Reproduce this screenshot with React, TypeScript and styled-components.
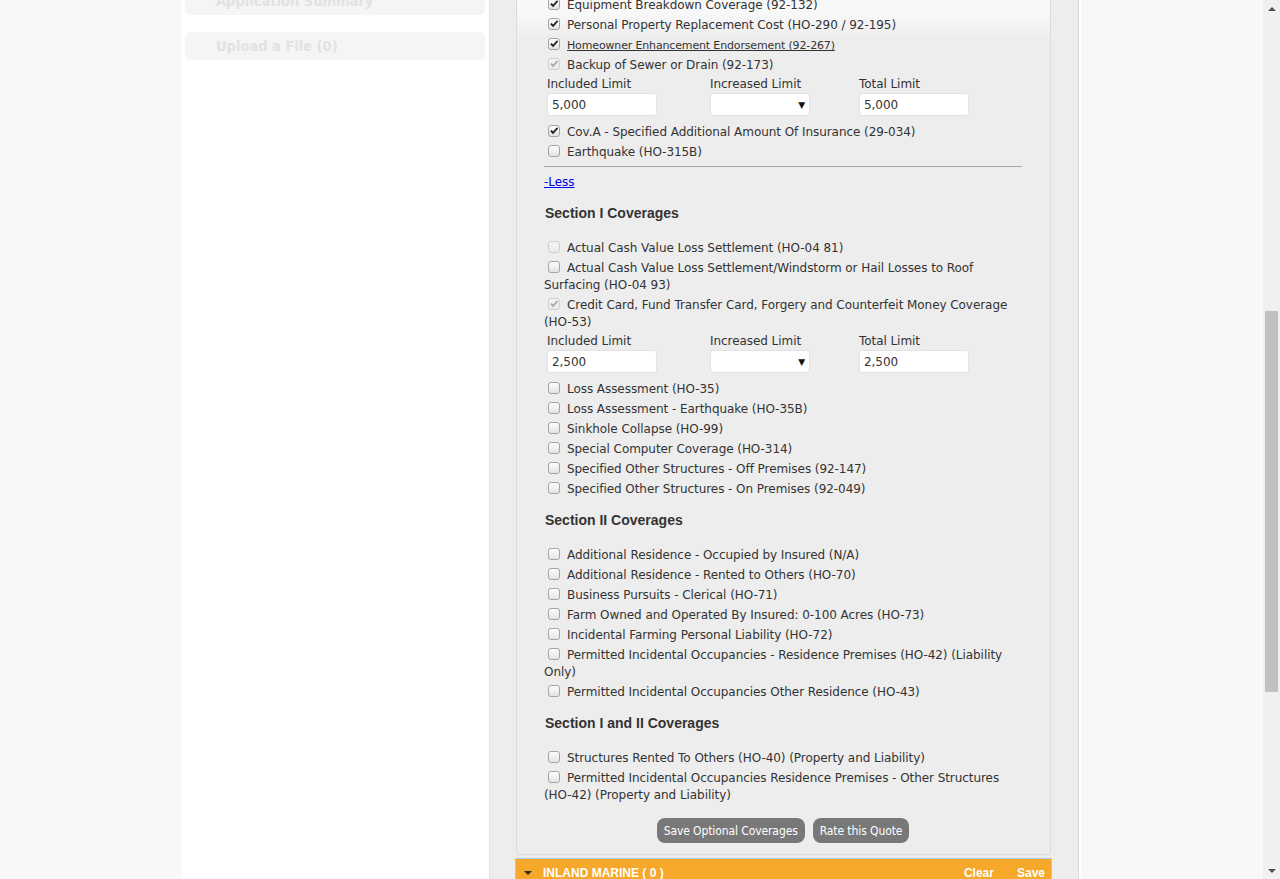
import React from "react";
import styled, { createGlobalStyle } from "styled-components";

type Item = {
  label: string;
  checked?: boolean;
  disabled?: boolean;
  link?: boolean;
  limits?: { included: string; total: string };
};

type Section = { title?: string; items: Item[] };

const topItems: Item[] = [
  { label: "Equipment Breakdown Coverage (92-132)", checked: true },
  { label: "Personal Property Replacement Cost (HO-290 / 92-195)", checked: true },
  { label: "Homeowner Enhancement Endorsement (92-267)", checked: true, link: true },
  {
    label: "Backup of Sewer or Drain (92-173)",
    checked: true,
    disabled: true,
    limits: { included: "5,000", total: "5,000" },
  },
  { label: "Cov.A - Specified Additional Amount Of Insurance (29-034)", checked: true },
  { label: "Earthquake (HO-315B)" },
];

const sections: Section[] = [
  {
    title: "Section I Coverages",
    items: [
      { label: "Actual Cash Value Loss Settlement (HO-04 81)", disabled: true },
      { label: "Actual Cash Value Loss Settlement/Windstorm or Hail Losses to Roof Surfacing (HO-04 93)" },
      {
        label: "Credit Card, Fund Transfer Card, Forgery and Counterfeit Money Coverage (HO-53)",
        checked: true,
        disabled: true,
        limits: { included: "2,500", total: "2,500" },
      },
      { label: "Loss Assessment (HO-35)" },
      { label: "Loss Assessment - Earthquake (HO-35B)" },
      { label: "Sinkhole Collapse (HO-99)" },
      { label: "Special Computer Coverage (HO-314)" },
      { label: "Specified Other Structures - Off Premises (92-147)" },
      { label: "Specified Other Structures - On Premises (92-049)" },
    ],
  },
  {
    title: "Section II Coverages",
    items: [
      { label: "Additional Residence - Occupied by Insured (N/A)" },
      { label: "Additional Residence - Rented to Others (HO-70)" },
      { label: "Business Pursuits - Clerical (HO-71)" },
      { label: "Farm Owned and Operated By Insured: 0-100 Acres (HO-73)" },
      { label: "Incidental Farming Personal Liability (HO-72)" },
      { label: "Permitted Incidental Occupancies - Residence Premises (HO-42) (Liability Only)" },
      { label: "Permitted Incidental Occupancies Other Residence (HO-43)" },
    ],
  },
  {
    title: "Section I and II Coverages",
    items: [
      { label: "Structures Rented To Others (HO-40) (Property and Liability)" },
      { label: "Permitted Incidental Occupancies Residence Premises - Other Structures (HO-42) (Property and Liability)" },
    ],
  },
];

const Check = ({ checked, disabled }: { checked?: boolean; disabled?: boolean }) => (
  <Box $disabled={disabled}>
    {checked && (
      <svg width="10" height="10" viewBox="0 0 10 10">
        <path
          d="M1.2 5.2 L2.6 3.9 L4.1 5.5 L7.9 1.2 L9.2 2.4 L4.1 8.2 Z"
          fill={disabled ? "#a8a8a8" : "#222"}
        />
      </svg>
    )}
  </Box>
);

const Coverage = ({ item }: { item: Item }) => (
  <>
    <Row>
      <Check checked={item.checked} disabled={item.disabled} />
      {item.link ? <Link>{item.label}</Link> : item.label}
    </Row>
    {item.limits && (
      <Limits>
        <Field>
          <FieldLabel>Included Limit</FieldLabel>
          <TextBox readOnly value={item.limits.included} />
        </Field>
        <Field>
          <FieldLabel>Increased Limit</FieldLabel>
          <SelectBox>▼</SelectBox>
        </Field>
        <Field>
          <FieldLabel>Total Limit</FieldLabel>
          <TextBox readOnly value={item.limits.total} />
        </Field>
      </Limits>
    )}
  </>
);

const App = () => {
  return (
    <>
      <GlobalStyle />
      <Screen>
        <Page>
          <Shell>
            <Sidebar>
              <SideButton>Application Summary</SideButton>
              <SideButton>Upload a File (0)</SideButton>
            </Sidebar>
            <Main>
              <Panel>
                {topItems.map((it) => (
                  <Coverage key={it.label} item={it} />
                ))}
                <Rule />
                <LessLink href="#">-Less</LessLink>
                {sections.map((s) => (
                  <div key={s.title}>
                    <Heading>{s.title}</Heading>
                    {s.items.map((it) => (
                      <Coverage key={it.label} item={it} />
                    ))}
                  </div>
                ))}
                <Actions>
                  <GrayButton>Save Optional Coverages</GrayButton>
                  <GrayButton>Rate this Quote</GrayButton>
                </Actions>
              </Panel>
              <OrangeBar>
                <Caret />
                <BarTitle>INLAND MARINE ( 0 )</BarTitle>
                <BarLink>Clear</BarLink>
                <BarLink>Save</BarLink>
              </OrangeBar>
            </Main>
          </Shell>
        </Page>
        <ScrollBar>
          <Arrow $up />
          <Track>
            <Thumb />
          </Track>
          <Arrow />
        </ScrollBar>
      </Screen>
    </>
  );
};

export default App;

const GlobalStyle = createGlobalStyle`
  html, body {
    margin: 0;
    padding: 0;
    overflow: hidden;
  }
  body {
    font-family: "DejaVu Sans", Verdana, sans-serif;
    font-size: 12px;
    letter-spacing: -0.06px;
    color: #333;
  }
`;

const Screen = styled.div`
  display: flex;
  width: 1280px;
  height: 879px;
  overflow: hidden;
`;

const Page = styled.div`
  flex: 1;
  background: #f8f8f8;
  overflow: hidden;
`;

const Shell = styled.div`
  width: 899px;
  margin: -28px auto 0;
  display: flex;
  background: #fff;
  min-height: 1000px;
`;

const Sidebar = styled.div`
  width: 307px;
  padding: 15px 4px 0 3px;
  box-sizing: border-box;
  display: flex;
  flex-direction: column;
  gap: 17px;
`;

const SideButton = styled.div`
  height: 28px;
  border-radius: 5px;
  background: #f5f5f5;
  color: #e2e2e2;
  font-family: "DejaVu Sans Condensed", "DejaVu Sans", sans-serif;
  font-stretch: condensed;
  font-weight: bold;
  font-size: 14.5px;
  letter-spacing: 0;
  line-height: 28px;
  padding-left: 31px;
`;

const Main = styled.div`
  width: 590px;
  box-sizing: border-box;
  background: #ededed;
  border-left: 1px solid #e4e4e4;
  border-right: 1px solid #dadada;
  padding: 0 27px 0 26px;
`;

const Panel = styled.div`
  border: 1px solid #dcdcdc;
  border-top: none;
  border-radius: 0 0 4px 4px;
  background: linear-gradient(#f8f8f8 0, #f8f8f8 42px, #ededed 66px);
  padding: 25px 28px 11px 27px;
`;

const Row = styled.div`
  line-height: 17px;
  margin-bottom: 3px;
`;

const Box = styled.span<{ $disabled?: boolean }>`
  display: inline-flex;
  align-items: center;
  justify-content: center;
  box-sizing: border-box;
  width: 12px;
  height: 12px;
  vertical-align: top;
  margin: 1px 7px 0 4px;
  border-radius: 3px;
  border: 1px solid ${(p) => (p.$disabled ? "#cfcfcf" : "#a3a3a3")};
  background: ${(p) =>
    p.$disabled
      ? "linear-gradient(#f4f4f4, #ebebeb)"
      : "linear-gradient(#fdfdfd, #e4e4e4)"};
`;

const Link = styled.span`
  font-size: 11px;
  letter-spacing: -0.15px;
  text-decoration: underline;
  cursor: pointer;
`;

const Limits = styled.div`
  display: grid;
  grid-template-columns: 163px 149px 1fr;
  padding-left: 3px;
  margin: -1px 0 8px;
`;

const Field = styled.div`
  display: flex;
  flex-direction: column;
  align-items: flex-start;
`;

const FieldLabel = styled.span`
  line-height: 17px;
`;

const TextBox = styled.input`
  box-sizing: border-box;
  width: 110px;
  height: 23px;
  border: 1px solid #e2e2e2;
  border-radius: 3px;
  background: #fff;
  padding: 0 4px;
  font: inherit;
  letter-spacing: inherit;
  color: #333;
  outline: none;
`;

const SelectBox = styled.div`
  box-sizing: border-box;
  width: 100px;
  height: 23px;
  border: 1px solid #e2e2e2;
  border-radius: 3px;
  background: #fff;
  text-align: right;
  padding-right: 4px;
  font-size: 9px;
  line-height: 22px;
  color: #111;
`;

const Rule = styled.hr`
  border: none;
  border-top: 1px solid #a8a8a8;
  margin: 5px 0 7px;
`;

const LessLink = styled.a`
  display: block;
  line-height: 17px;
  color: #0000ee;
  text-decoration: underline;
  width: fit-content;
`;

const Heading = styled.div`
  font-family: "Liberation Sans", Arial, sans-serif;
  font-weight: bold;
  font-size: 14px;
  letter-spacing: 0;
  line-height: 17px;
  margin: 14px 0 18px 1px;
`;

const Actions = styled.div`
  display: flex;
  justify-content: center;
  gap: 8px;
  margin-top: 14px;
`;

const GrayButton = styled.button`
  font-family: "DejaVu Sans Condensed", "DejaVu Sans", sans-serif;
  font-stretch: condensed;
  font-size: 12px;
  letter-spacing: -0.1px;
  height: 25px;
  padding: 0 7px;
  border: none;
  border-radius: 8px;
  background: #787878;
  color: #fff;
  cursor: pointer;
`;

const OrangeBar = styled.div`
  margin: 3px -1px 0 -1px;
  height: 28px;
  box-sizing: border-box;
  background: #f6a82a;
  border: 1px solid #a8c8ec;
  border-bottom: none;
  border-radius: 2px 2px 0 0;
  display: flex;
  align-items: center;
  padding: 0 6px 0 8px;
  font-family: "Liberation Sans", Arial, sans-serif;
  font-weight: bold;
  font-size: 12px;
  letter-spacing: 0;
  color: #fff;
`;

const Caret = styled.span`
  width: 0;
  height: 0;
  border-left: 4px solid transparent;
  border-right: 4px solid transparent;
  border-top: 4px solid #3a2a10;
  margin-right: 11px;
`;

const BarTitle = styled.span`
  flex: 1;
`;

const BarLink = styled.span`
  margin-left: 23px;
`;

const ScrollBar = styled.div`
  width: 17px;
  background: #f0f0f0;
  display: flex;
  flex-direction: column;
`;

const Track = styled.div`
  flex: 1;
  padding: 294px 2px 0;
`;

const Thumb = styled.div`
  height: 381px;
  background: #c1c1c1;
`;

const Arrow = styled.div<{ $up?: boolean }>`
  height: 17px;
  display: flex;
  align-items: center;
  justify-content: center;
  &::after {
    content: "";
    border-left: 4px solid transparent;
    border-right: 4px solid transparent;
    ${(p) =>
      p.$up
        ? "border-bottom: 4px solid #505050;"
        : "border-top: 4px solid #505050;"}
  }
`;
